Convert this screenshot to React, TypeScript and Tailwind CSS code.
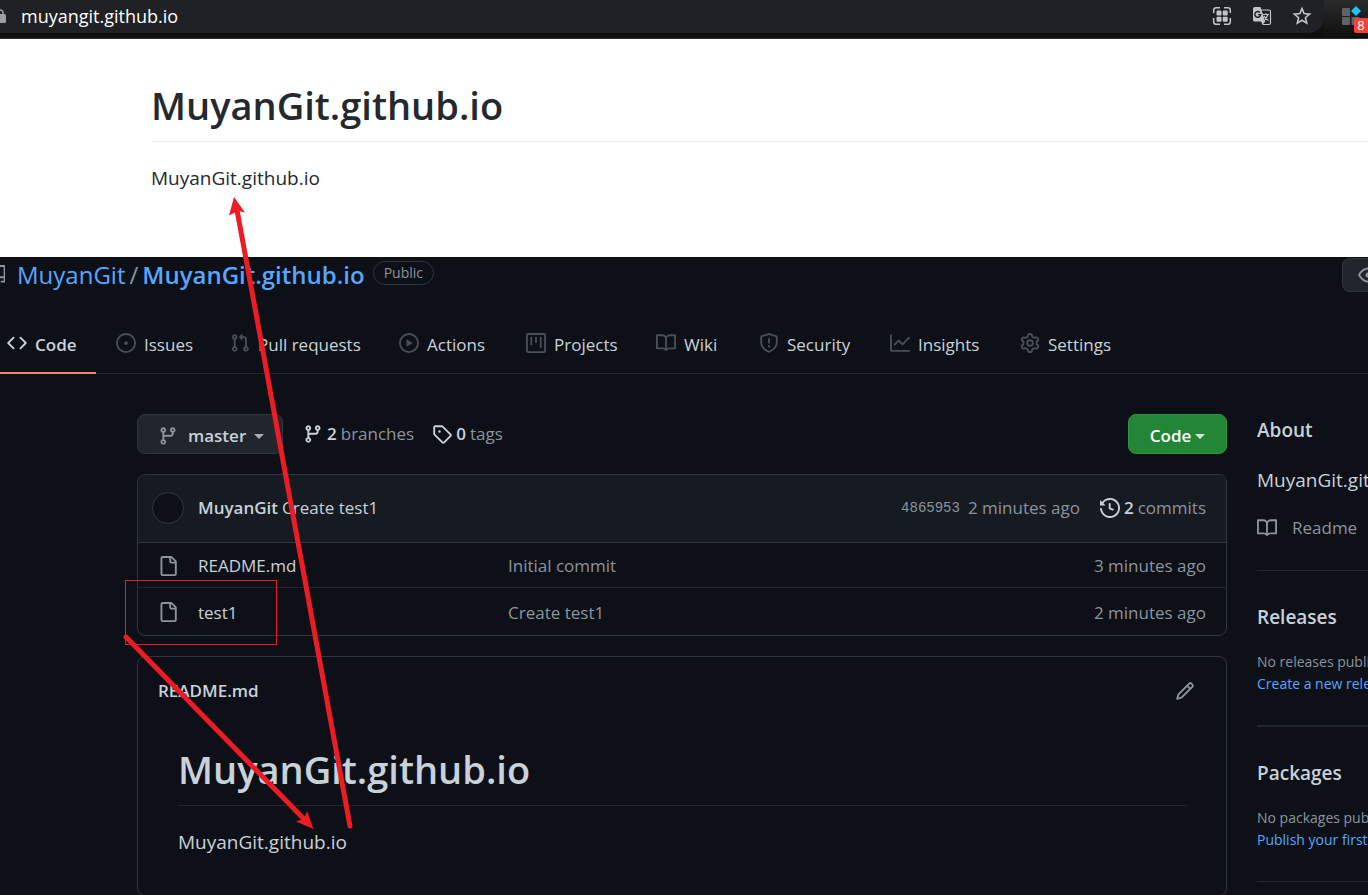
import React from "react";

const PATHS = {
  code: "M4.72 3.22a.75.75 0 011.06 1.06L2.06 8l3.72 3.72a.75.75 0 11-1.06 1.06L.47 8.53a.75.75 0 010-1.06l4.25-4.25zm6.56 0a.75.75 0 10-1.06 1.06L13.94 8l-3.72 3.72a.75.75 0 101.06 1.06l4.25-4.25a.75.75 0 000-1.06l-4.25-4.25z",
  issue: "M8 9.5a1.5 1.5 0 100-3 1.5 1.5 0 000 3zM8 0a8 8 0 100 16A8 8 0 008 0zM1.5 8a6.5 6.5 0 1113 0 6.5 6.5 0 01-13 0z",
  pull: "M7.177 3.073L9.573.677A.25.25 0 0110 .854v4.792a.25.25 0 01-.427.177L7.177 3.427a.25.25 0 010-.354zM3.75 2.5a.75.75 0 100 1.5.75.75 0 000-1.5zm-2.25.75a2.25 2.25 0 113 2.122v5.256a2.251 2.251 0 11-1.5 0V5.372A2.25 2.25 0 011.5 3.25zM11 2.5h-1V4h1a1 1 0 011 1v5.628a2.251 2.251 0 101.5 0V5A2.5 2.5 0 0011 2.5zm1 10.25a.75.75 0 111.5 0 .75.75 0 01-1.5 0zM3.75 12a.75.75 0 100 1.5.75.75 0 000-1.5z",
  play: "M1.5 8a6.5 6.5 0 1113 0 6.5 6.5 0 01-13 0zM8 0a8 8 0 100 16A8 8 0 008 0zM6.379 5.227A.25.25 0 006 5.442v5.117a.25.25 0 00.379.214l4.264-2.559a.25.25 0 000-.428L6.379 5.227z",
  project: "M1.75 0A1.75 1.75 0 000 1.75v12.5C0 15.216.784 16 1.75 16h12.5A1.75 1.75 0 0016 14.25V1.75A1.75 1.75 0 0014.25 0H1.75zM1.5 1.75a.25.25 0 01.25-.25h12.5a.25.25 0 01.25.25v12.5a.25.25 0 01-.25.25H1.75a.25.25 0 01-.25-.25V1.75zM11.75 3a.75.75 0 00-.75.75v7.5a.75.75 0 001.5 0v-7.5a.75.75 0 00-.75-.75zm-8.25.75a.75.75 0 011.5 0v5.5a.75.75 0 01-1.5 0v-5.5zM8 3a.75.75 0 00-.75.75v3.5a.75.75 0 001.5 0v-3.5A.75.75 0 008 3z",
  book: "M0 1.75A.75.75 0 01.75 1h4.253c1.227 0 2.317.59 3 1.501A3.744 3.744 0 0111.006 1h4.245a.75.75 0 01.75.75v10.5a.75.75 0 01-.75.75h-4.507a2.25 2.25 0 00-1.591.659l-.622.621a.75.75 0 01-1.06 0l-.622-.621A2.25 2.25 0 005.258 13H.75a.75.75 0 01-.75-.75V1.75zm8.755 3a2.25 2.25 0 012.25-2.25H14.5v9h-3.757c-.71 0-1.4.201-1.992.572l.004-7.322zm-1.504 7.324l.004-5.073-.002-2.253A2.25 2.25 0 005.003 2.5H1.5v9h3.757a3.75 3.75 0 011.994.574z",
  shield: "M7.467.133a1.75 1.75 0 011.066 0l5.25 1.68A1.75 1.75 0 0115 3.48V7c0 1.566-.32 3.182-1.303 4.682-.983 1.498-2.585 2.813-5.032 3.855a1.7 1.7 0 01-1.33 0c-2.447-1.042-4.049-2.357-5.032-3.855C1.32 10.182 1 8.566 1 7V3.48a1.75 1.75 0 011.217-1.667l5.25-1.68zm.61 1.429a.25.25 0 00-.153 0l-5.25 1.68a.25.25 0 00-.174.238V7c0 1.358.275 2.666 1.057 3.86.784 1.194 2.121 2.34 4.366 3.297a.2.2 0 00.154 0c2.245-.956 3.582-2.104 4.366-3.298C13.225 9.666 13.5 8.36 13.5 7V3.48a.25.25 0 00-.174-.237l-5.25-1.68zM9 10.5a1 1 0 11-2 0 1 1 0 012 0zm-.25-5.75a.75.75 0 10-1.5 0v3a.75.75 0 001.5 0v-3z",
  graph: "M1.5 1.75a.75.75 0 00-1.5 0v12.5c0 .414.336.75.75.75h14.5a.75.75 0 000-1.5H1.5V1.75zm14.28 2.53a.75.75 0 00-1.06-1.06L10 7.94 7.53 5.47a.75.75 0 00-1.06 0L3.22 8.72a.75.75 0 001.06 1.06L7 7.06l2.47 2.47a.75.75 0 001.06 0l5.25-5.25z",
  gear: "M7.429 1.525a6.593 6.593 0 011.142 0c.036.003.108.036.137.146l.289 1.105c.147.56.55.967.997 1.189.174.086.341.183.501.29.417.278.97.423 1.53.27l1.102-.303c.11-.03.175.016.195.046.219.31.41.641.573.989.014.031.022.11-.059.19l-.815.806c-.411.406-.562.957-.53 1.456a4.588 4.588 0 010 .582c-.032.499.119 1.05.53 1.456l.815.806c.08.08.073.159.059.19a6.494 6.494 0 01-.573.99c-.02.029-.086.074-.195.045l-1.103-.303c-.559-.153-1.112-.008-1.529.27-.16.107-.327.204-.5.29-.449.222-.851.628-.998 1.189l-.289 1.105c-.029.11-.101.143-.137.146a6.613 6.613 0 01-1.142 0c-.036-.003-.108-.037-.137-.146l-.289-1.105c-.147-.56-.55-.967-.997-1.189a4.502 4.502 0 01-.501-.29c-.417-.278-.97-.423-1.53-.27l-1.102.303c-.11.03-.175-.016-.195-.046a6.492 6.492 0 01-.573-.989c-.014-.031-.022-.11.059-.19l.815-.806c.411-.406.562-.957.53-1.456a4.587 4.587 0 010-.582c.032-.499-.119-1.05-.53-1.456l-.815-.806c-.08-.08-.073-.159-.059-.19a6.44 6.44 0 01.573-.99c.02-.029.086-.075.195-.045l1.103.303c.559.153 1.112.008 1.529-.27.16-.107.327-.204.5-.29.449-.222.851-.628.998-1.189l.289-1.105c.029-.11.101-.143.137-.146zM8 0c-.236 0-.47.01-.701.03-.743.065-1.29.615-1.458 1.261l-.29 1.106c-.017.066-.078.158-.211.224a5.994 5.994 0 00-.668.386c-.123.082-.233.09-.3.071L3.27 2.776c-.644-.177-1.392.02-1.82.63a7.977 7.977 0 00-.704 1.217c-.315.675-.111 1.422.363 1.891l.815.806c.05.048.098.147.088.294a6.084 6.084 0 000 .772c.01.147-.038.246-.088.294l-.815.806c-.474.469-.678 1.216-.363 1.891.2.428.436.835.704 1.218.428.609 1.176.806 1.82.63l1.103-.303c.066-.019.176-.011.299.071.213.143.436.272.668.386.133.066.194.158.212.224l.289 1.106c.169.646.715 1.196 1.458 1.26a8.094 8.094 0 001.402 0c.743-.064 1.29-.614 1.458-1.26l.29-1.106c.017-.066.078-.158.211-.224a5.98 5.98 0 00.668-.386c.123-.082.233-.09.3-.071l1.102.302c.644.177 1.392-.02 1.82-.63.268-.382.505-.789.704-1.217.315-.675.111-1.422-.364-1.891l-.814-.806c-.05-.048-.098-.147-.088-.294a6.1 6.1 0 000-.772c-.01-.147.039-.246.088-.294l.814-.806c.475-.469.679-1.216.364-1.891a7.992 7.992 0 00-.704-1.218c-.428-.609-1.176-.806-1.82-.63l-1.103.303c-.066.019-.176.011-.299-.071a5.991 5.991 0 00-.668-.386c-.133-.066-.194-.158-.212-.224L10.16 1.29C9.99.645 9.444.095 8.701.031A8.094 8.094 0 008 0zm1.5 8a1.5 1.5 0 11-3 0 1.5 1.5 0 013 0zM11 8a3 3 0 11-6 0 3 3 0 016 0z",
  branch: "M11.75 2.5a.75.75 0 100 1.5.75.75 0 000-1.5zm-2.25.75a2.25 2.25 0 113 2.122V6A2.5 2.5 0 0110 8.5H6a1 1 0 00-1 1v1.128a2.251 2.251 0 11-1.5 0V5.372a2.25 2.25 0 111.5 0v1.836A2.492 2.492 0 016 7h4a1 1 0 001-1v-.628A2.25 2.25 0 019.5 3.25zM4.25 12a.75.75 0 100 1.5.75.75 0 000-1.5zM3.5 3.25a.75.75 0 111.5 0 .75.75 0 01-1.5 0z",
  tag: "M2.5 7.775V2.75a.25.25 0 01.25-.25h5.025a.25.25 0 01.177.073l6.25 6.25a.25.25 0 010 .354l-5.025 5.025a.25.25 0 01-.354 0l-6.25-6.25a.25.25 0 01-.073-.177zm-1.5 0V2.75C1 1.784 1.784 1 2.75 1h5.025c.464 0 .91.184 1.238.513l6.25 6.25a1.75 1.75 0 010 2.474l-5.026 5.026a1.75 1.75 0 01-2.474 0l-6.25-6.25A1.75 1.75 0 011 7.775zM6 5a1 1 0 100 2 1 1 0 000-2z",
  history: "M1.643 3.143L.427 1.927A.25.25 0 000 2.104V5.75c0 .138.112.25.25.25h3.646a.25.25 0 00.177-.427L2.715 4.215a6.5 6.5 0 11-1.18 4.458.75.75 0 10-1.493.154 8.001 8.001 0 101.6-5.684zM7.75 4a.75.75 0 01.75.75v2.992l2.028.812a.75.75 0 01-.557 1.392l-2.5-1A.75.75 0 017 8.25v-3.5A.75.75 0 017.75 4z",
  file: "M3.75 1.5a.25.25 0 00-.25.25v12.5c0 .138.112.25.25.25h9.5a.25.25 0 00.25-.25V6h-2.75A1.75 1.75 0 019 4.25V1.5H3.75zm6.75.062V4.25c0 .138.112.25.25.25h2.688a.252.252 0 00-.011-.013l-2.914-2.914a.272.272 0 00-.013-.011zM2 1.75C2 .784 2.784 0 3.75 0h6.586c.464 0 .909.184 1.237.513l2.914 2.914c.329.328.513.773.513 1.237v9.586A1.75 1.75 0 0113.25 16h-9.5A1.75 1.75 0 012 14.25V1.75z",
  pencil: "M11.013 1.427a1.75 1.75 0 012.474 0l1.086 1.086a1.75 1.75 0 010 2.474l-8.61 8.61c-.21.21-.47.364-.756.445l-3.251.93a.75.75 0 01-.927-.928l.929-3.25a1.75 1.75 0 01.445-.758l8.61-8.61zm1.414 1.06a.25.25 0 00-.354 0L10.811 3.75l1.439 1.44 1.263-1.263a.25.25 0 000-.354l-1.086-1.086zM11.189 6.25L9.75 4.81l-6.286 6.287a.25.25 0 00-.064.108l-.558 1.953 1.953-.558a.249.249 0 00.108-.064l6.286-6.286z",
  eye: "M1.679 7.932c.412-.621 1.242-1.75 2.366-2.717C5.175 4.242 6.527 3.5 8 3.5c1.473 0 2.824.742 3.955 1.715 1.124.967 1.954 2.096 2.366 2.717a.119.119 0 010 .136c-.412.621-1.242 1.75-2.366 2.717C10.825 11.758 9.473 12.5 8 12.5c-1.473 0-2.824-.742-3.955-1.715C2.92 9.818 2.09 8.69 1.679 8.068a.119.119 0 010-.136zM8 2c-1.981 0-3.67.992-4.933 2.078C1.797 5.169.88 6.423.43 7.1a1.619 1.619 0 000 1.798c.45.678 1.367 1.932 2.637 3.024C4.329 13.008 6.019 14 8 14c1.981 0 3.67-.992 4.933-2.078 1.27-1.091 2.187-2.345 2.637-3.023a1.619 1.619 0 000-1.798c-.45-.678-1.367-1.932-2.637-3.023C11.671 2.992 9.981 2 8 2zm0 8a2 2 0 100-4 2 2 0 000 4z",
  repo: "M2 2.5A2.5 2.5 0 014.5 0h8.75a.75.75 0 01.75.75v12.5a.75.75 0 01-.75.75h-2.5a.75.75 0 110-1.5h1.75v-2h-8a1 1 0 00-.714 1.7.75.75 0 01-1.072 1.05A2.495 2.495 0 012 11.5v-9zm10.5-1V9h-8c-.356 0-.694.074-1 .208V2.5a1 1 0 011-1h8zM5 12.25v3.25a.25.25 0 00.4.2l1.45-1.087a.25.25 0 01.3 0L8.6 15.7a.25.25 0 00.4-.2v-3.25a.25.25 0 00-.25-.25h-3.5a.25.25 0 00-.25.25z",
};

type IconName = keyof typeof PATHS;

function Octicon({ name, className = "" }: { name: IconName; className?: string }) {
  return (
    <svg viewBox="0 0 16 16" aria-hidden="true" className={`size-5 shrink-0 fill-current ${className}`}>
      <path fillRule="evenodd" d={PATHS[name]} />
    </svg>
  );
}

function Caret() {
  return <span aria-hidden="true" className="border-x-[5px] border-t-[5px] border-x-transparent border-t-current opacity-80" />;
}

function AddressBar() {
  return (
    <header className="flex h-[39px] border-b border-[#2b2b2b] bg-linear-to-b from-[#2b2b2b] to-[#0f0f0f]">
      <div className="flex flex-1 border-b-[5px] border-[#0f0f0f] bg-linear-to-b from-[#2b2b2b] to-[#0f0f0f]">
        <div className="flex flex-1 items-center rounded-br-2xl bg-[#202124] pr-3 pb-0.5">
          <div className="flex w-[6px] shrink-0 justify-end overflow-hidden">
            <svg viewBox="0 0 12 14" className="h-[14px] w-3 shrink-0" aria-hidden="true">
              <rect y="5" width="12" height="9" rx="1.500" fill="#9aa0a6" />
              <path d="M3 6V4a3 3 0 0 1 6 0v2" fill="none" stroke="#9aa0a6" strokeWidth="1.500" />
            </svg>
          </div>
          <span className="flex-1 pl-[15px] text-lg leading-6 text-white">muyangit.github.io</span>
          <div className="flex items-center gap-5 text-[#c4c4c4]">
            <button type="button" aria-label="QR code">
              <svg viewBox="0 0 20 20" className="size-5" fill="none" stroke="currentColor" strokeWidth="1.500">
                <path d="M1.700 7V4a2.300 2.300 0 0 1 2.300-2.300H8M12 1.700h4A2.300 2.300 0 0 1 18.300 4v3M18.300 12v4a2.300 2.300 0 0 1-2.300 2.300h-4M8 18.300H4A2.300 2.300 0 0 1 1.700 16v-4" />
                <g fill="currentColor" stroke="none">
                  <rect x="4.500" y="4.500" width="5" height="5" rx="1" />
                  <rect x="10.700" y="4.500" width="5" height="5" rx="1" />
                  <rect x="4.500" y="10.700" width="5" height="5" rx="1" />
                  <rect x="10.700" y="10.700" width="5" height="5" rx="1" />
                </g>
              </svg>
            </button>
            <button type="button" aria-label="Translate">
              <svg viewBox="0 0 20 20" className="size-5" fill="none" stroke="currentColor">
                <path d="M9 4h8a1.500 1.500 0 0 1 1.500 1.500V17a1.500 1.500 0 0 1-1.500 1.500h-6" strokeWidth="1.200" />
                <path d="M2.500 1h6l4.700 14.500H2.500A1.500 1.500 0 0 1 1 14V2.500A1.500 1.500 0 0 1 2.500 1z" fill="currentColor" stroke="none" />
                <path d="M9 15h4.500L10.500 19z" fill="currentColor" stroke="none" />
                <path d="M7.900 6.500a2.900 2.900 0 1 0 .7 2.100H6" stroke="#202124" strokeWidth="1.400" />
                <path d="M11 8.500H17M14 7.300v1.200M15.800 8.500c-.6 2.200-1.900 3.900-3 5M12 10c.8 1.600 2.500 3.300 4.400 4.400" strokeWidth="1.200" />
              </svg>
            </button>
            <button type="button" aria-label="Bookmark">
              <svg viewBox="0 0 20 20" className="size-5" fill="none" stroke="currentColor" strokeWidth="1.600">
                <path d="M10 2.600l2.100 5 5.500.5-4.200 3.600 1.300 5.400L10 14.200l-4.700 2.900 1.300-5.400-4.200-3.600 5.500-.5z" />
              </svg>
            </button>
          </div>
        </div>
      </div>
      <button type="button" aria-label="Extensions, 8 notifications" className="relative flex h-8 w-[44px] shrink-0 items-center pl-[18px]">
        <svg viewBox="0 0 20 20" className="size-5" aria-hidden="true">
          <g fill="#5f6368">
            <rect y="2" width="8" height="8" rx="1" />
            <rect y="11" width="8" height="8" rx="1" />
            <rect x="9.500" y="11" width="8" height="8" rx="1" />
          </g>
          <path d="M14 0l5 5-5 5-5-5z" fill="#19c5ff" />
        </svg>
        <span className="absolute right-0 top-[18px] flex h-[15px] w-[14px] items-center justify-center rounded-l-xs bg-[#f44336] text-[13px] leading-none text-white">8</span>
      </button>
    </header>
  );
}

const TABS: { label: string; icon: IconName; width: string }[] = [
  { label: "Issues", icon: "issue", width: "w-[114px]" },
  { label: "Pull requests", icon: "pull", width: "w-[169px]" },
  { label: "Actions", icon: "play", width: "w-[127px]" },
  { label: "Projects", icon: "project", width: "w-[130px]" },
  { label: "Wiki", icon: "book", width: "w-[103px]" },
  { label: "Security", icon: "shield", width: "w-[131px]" },
  { label: "Insights", icon: "graph", width: "w-[130px]" },
  { label: "Settings", icon: "gear", width: "w-[132px]" },
];

function RepoHeader() {
  return (
    <div>
      <div className="flex h-9 items-center text-2xl leading-9">
        <div className="flex w-[5px] shrink-0 justify-end overflow-hidden text-[#8b949e]">
          <Octicon name="repo" className="-mr-[3px]" />
        </div>
        <a href="#owner" className="pl-3 text-[#58a6ff]">MuyanGit</a>
        <span className="px-1 text-[#8b949e]">/</span>
        <a href="#repo" className="font-semibold text-[#58a6ff]">MuyanGit.github.io</a>
        <span className="mb-1 ml-2 rounded-full border border-[#30363d] px-[10px] text-sm leading-[22px] font-medium text-[#8b949e]">Public</span>
        <button type="button" aria-label="Watch" className="ml-auto flex h-[34px] w-[26px] shrink-0 items-center overflow-hidden rounded-l-lg border border-r-0 border-[#30363d] bg-[#21262d] pl-[15px] text-[#8b949e]">
          <Octicon name="eye" />
        </button>
      </div>
      <nav aria-label="Repository" className="mt-[22px] flex h-[59px] border-b border-[#21262d] text-[17px] text-[#c9d1d9]">
        <a href="#code" className="-mb-px flex w-24 items-center gap-2 border-b-2 border-[#f78166] pt-0.5 pl-[7px] font-semibold">
          <Octicon name="code" className="-mt-1" />
          Code
        </a>
        {TABS.map((t) => (
          <a key={t.label} href={`#${t.label}`} className={`flex items-center gap-2 pt-0.5 pl-5 whitespace-nowrap ${t.width}`}>
            <Octicon name={t.icon} className="-mt-1 text-[#484f58]" />
            {t.label}
          </a>
        ))}
      </nav>
    </div>
  );
}

const FILES = [
  { name: "README.md", message: "Initial commit", age: "3 minutes ago", row: "h-[44px]" },
  { name: "test1", message: "Create test1", age: "2 minutes ago", row: "h-[48px] border-t border-[#21262d]" },
];

function FileBrowser() {
  return (
    <div className="mt-5 overflow-hidden rounded-lg border border-[#30363d]">
      <div className="flex h-[68px] items-center border-b border-[#30363d] bg-[#161b22] pr-5 pb-px pl-[14px]">
        <span className="size-8 shrink-0 rounded-full border border-[#30363d] bg-[#0d1117]" />
        <a href="#author" className="ml-[14px] font-semibold">MuyanGit</a>
        <a href="#commit" className="ml-1">Create test1</a>
        <div className="ml-auto flex items-center text-[#8b949e]">
          <a href="#sha" className="font-['Liberation_Mono',monospace] text-sm">4865953</a>
          <span className="ml-2">2 minutes ago</span>
          <a href="#commits" className="ml-5 flex items-center">
            <Octicon name="history" className="text-[#c9d1d9]" />
            <strong className="mx-1 font-semibold text-[#c9d1d9]">2</strong>commits
          </a>
        </div>
      </div>
      <table className="w-full table-fixed border-collapse text-left">
        <tbody>
          {FILES.map((f) => (
            <tr key={f.name} className={f.row}>
              <td className="w-[60px] pt-0.5 pl-5 text-[#8b949e]"><Octicon name="file" /></td>
              <td className="w-[310px] pt-0.5"><a href={`#${f.name}`}>{f.name}</a></td>
              <td className="pt-0.5 text-[#8b949e]">{f.message}</td>
              <td className="pt-0.5 pr-5 text-right text-[#8b949e]">{f.age}</td>
            </tr>
          ))}
        </tbody>
      </table>
    </div>
  );
}

function Sidebar() {
  const link = "block text-[#58a6ff]";
  return (
    <aside className="w-[111px] shrink-0 overflow-hidden whitespace-nowrap">
      <section>
        <h2 className="text-[19px] leading-8 font-semibold">About</h2>
        <p className="mt-[18px] text-[19px] leading-8">MuyanGit.github.io</p>
        <a href="#readme" className="mt-4 flex items-center gap-[15px] leading-8 text-[#8b949e]">
          <Octicon name="book" />
          Readme
        </a>
      </section>
      <section className="mt-[26px] border-t border-[#21262d] pt-[30px] text-sm leading-[22px]">
        <h2 className="text-[19px] leading-8 font-semibold">Releases</h2>
        <p className="mt-[18px] text-[#8b949e]">No releases published</p>
        <a href="#releases" className={link}>Create a new release</a>
      </section>
      <section className="mt-[30px] border-t-2 border-[#21262d] pt-[30px] text-sm leading-[22px]">
        <h2 className="text-[19px] leading-8 font-semibold">Packages</h2>
        <p className="mt-[18px] text-[#8b949e]">No packages published</p>
        <a href="#packages" className={link}>Publish your first package</a>
      </section>
      <hr className="mt-[30px] border-[#21262d]" />
    </aside>
  );
}

function Annotations() {
  return (
    <>
      <div className="pointer-events-none absolute top-[580px] left-[125px] h-[65px] w-[152px] border border-[#ed1c24]" />
      <svg className="pointer-events-none absolute top-0 left-0" width="400" height="895" viewBox="0 0 400 895" aria-hidden="true">
        <g stroke="#ed1c24" strokeWidth="5" strokeLinecap="round">
          <path d="M350 826L237 210" />
          <path d="M126 637L305 820" />
        </g>
        <g fill="#ed1c24">
          <path d="M234 197L245 212.500L238 211L229 215.500z" />
          <path d="M313.500 829L307 811L304 819L296 821.500z" />
        </g>
      </svg>
    </>
  );
}

export default function App() {
  return (
    <div className="relative min-h-screen overflow-hidden bg-[#0d1117] font-['Open_Sans','Noto_Sans',sans-serif] text-[17px] text-[#c9d1d9]">
      <AddressBar />
      <section className="bg-white pt-[41px] pb-16 pl-[151px] text-[#24292e]">
        <h1 className="border-b border-[#eaecef] pb-[11px] text-[38px] leading-[50px] font-semibold">MuyanGit.github.io</h1>
        <p className="mt-[21px] text-[19px] leading-[30px]">MuyanGit.github.io</p>
      </section>
      <RepoHeader />
      <main className="flex gap-[30px] pt-10 pl-[137px]">
        <div className="min-w-0 flex-1">
          <div className="flex h-10 items-center">
            <button type="button" className="flex h-10 w-[146px] items-center rounded-lg border border-[#30363d] bg-[#21262d] pt-1 pl-5 font-semibold">
              <Octicon name="branch" className="mr-[10px] text-[#8b949e]" />
              <span className="mr-2">master</span>
              <Caret />
            </button>
            <a href="#branches" className="ml-5 flex items-center text-[#8b949e]">
              <Octicon name="branch" className="text-[#c9d1d9]" />
              <strong className="mx-1 font-semibold text-[#c9d1d9]">2</strong>branches
            </a>
            <a href="#tags" className="ml-[18px] flex items-center text-[#8b949e]">
              <Octicon name="tag" className="text-[#c9d1d9]" />
              <strong className="mx-1 font-semibold text-[#c9d1d9]">0</strong>tags
            </a>
            <button type="button" className="ml-auto flex h-10 w-[99px] items-center justify-center gap-1 rounded-lg border border-[#2f9444] bg-[#238636] pt-1 font-semibold text-white">
              Code
              <Caret />
            </button>
          </div>
          <FileBrowser />
          <article className="mt-5 rounded-lg border border-[#30363d] px-5 pt-5 pb-[38px]">
            <div className="flex h-7 items-center justify-between pr-[11px]">
              <h2 className="font-semibold">README.md</h2>
              <button type="button" aria-label="Edit README.md" className="text-[#8b949e]"><Octicon name="pencil" /></button>
            </div>
            <div className="mt-[39px] px-5">
              <h1 className="border-b border-[#21262d] pb-[11px] text-[38px] leading-[50px] font-semibold">MuyanGit.github.io</h1>
              <p className="mt-[21px] text-[19px] leading-[30px]">MuyanGit.github.io</p>
            </div>
          </article>
        </div>
        <Sidebar />
      </main>
      <Annotations />
    </div>
  );
}
